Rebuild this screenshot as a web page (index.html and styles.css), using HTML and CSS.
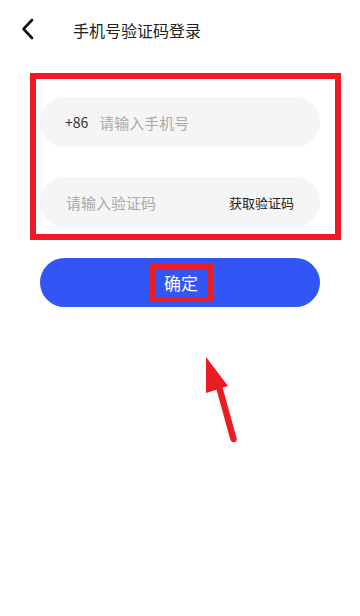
FILE: index.html
```html
<!DOCTYPE html>
<html lang="zh-CN">

<head>
    <meta charset="UTF-8">
    <meta name="viewport" content="width=device-width, initial-scale=1.0">
    <title>手机号验证码登录</title>
    <link rel="stylesheet" href="styles.css">
</head>

<body>
    <div class="page">
        <div class="header">
            <span class="back">
                <svg width="14" height="22" viewBox="0 0 14 22">
                    <path d="M11 2 L2.5 11 L11 20" fill="none" stroke="#111" stroke-width="2.6"
                        stroke-linecap="round" stroke-linejoin="round" />
                </svg>
            </span>
            <h1>手机号验证码登录</h1>
        </div>

        <div class="form-box">
            <div class="field">
                <span class="prefix">+86</span>
                <span class="placeholder">请输入手机号</span>
            </div>
            <div class="field">
                <span class="placeholder code">请输入验证码</span>
                <span class="get-code">获取验证码</span>
            </div>
        </div>

        <button class="btn-confirm"><span class="mark">确定</span></button>

        <svg class="arrow" width="40" height="96" viewBox="0 0 40 96">
            <path d="M18 32 L33.5 88" stroke="#ec1c24" stroke-width="6.5" stroke-linecap="round" />
            <polygon points="6,6 6,42 28,35" fill="#ec1c24" />
        </svg>
    </div>
</body>

</html>
```

FILE: styles.css
```css
body {
    margin: 0;
    background-color: #fff;
    font-family: "Noto Sans CJK SC", "Noto Sans", sans-serif;
}

.page {
    position: relative;
    width: 360px;
    height: 616px;
    overflow: hidden;
}

.header {
    display: flex;
    align-items: center;
    height: 60px;
}

.back {
    display: flex;
    width: 14px;
    margin-left: 21px;
    margin-top: -3px;
}

.header h1 {
    margin: 0 0 0 38px;
    font-size: 16px;
    font-weight: normal;
    color: #222;
}

.form-box {
    width: 295px;
    margin: 13px 0 0 30px;
    padding: 18px 0 7px 4px;
    border: 6px solid #ec1c24;
    display: flex;
    flex-direction: column;
    gap: 30px;
}

.field {
    display: flex;
    align-items: center;
    width: 280px;
    height: 50px;
    border-radius: 25px;
    background-color: #f5f5f5;
    box-sizing: border-box;
    padding: 0 26px 0 25px;
}

.prefix {
    font-size: 14px;
    color: #333;
    margin-right: 11px;
}

.placeholder {
    font-size: 15px;
    color: #aaa;
}

.placeholder.code {
    margin-left: 1px;
    flex: 1;
}

.get-code {
    font-size: 13px;
    color: #222;
}

.btn-confirm {
    display: flex;
    align-items: center;
    justify-content: center;
    width: 280px;
    height: 49px;
    margin: 18px 0 0 40px;
    border: none;
    border-radius: 25px;
    background-color: #3256f6;
    padding: 0;
    font-family: inherit;
}

.mark {
    display: flex;
    align-items: center;
    justify-content: center;
    width: 53px;
    height: 28px;
    border: 5px solid #ec1c24;
    color: #fff;
    font-size: 17px;
    margin-left: 2px;
}

.arrow {
    position: absolute;
    left: 200px;
    top: 351px;
}
```
